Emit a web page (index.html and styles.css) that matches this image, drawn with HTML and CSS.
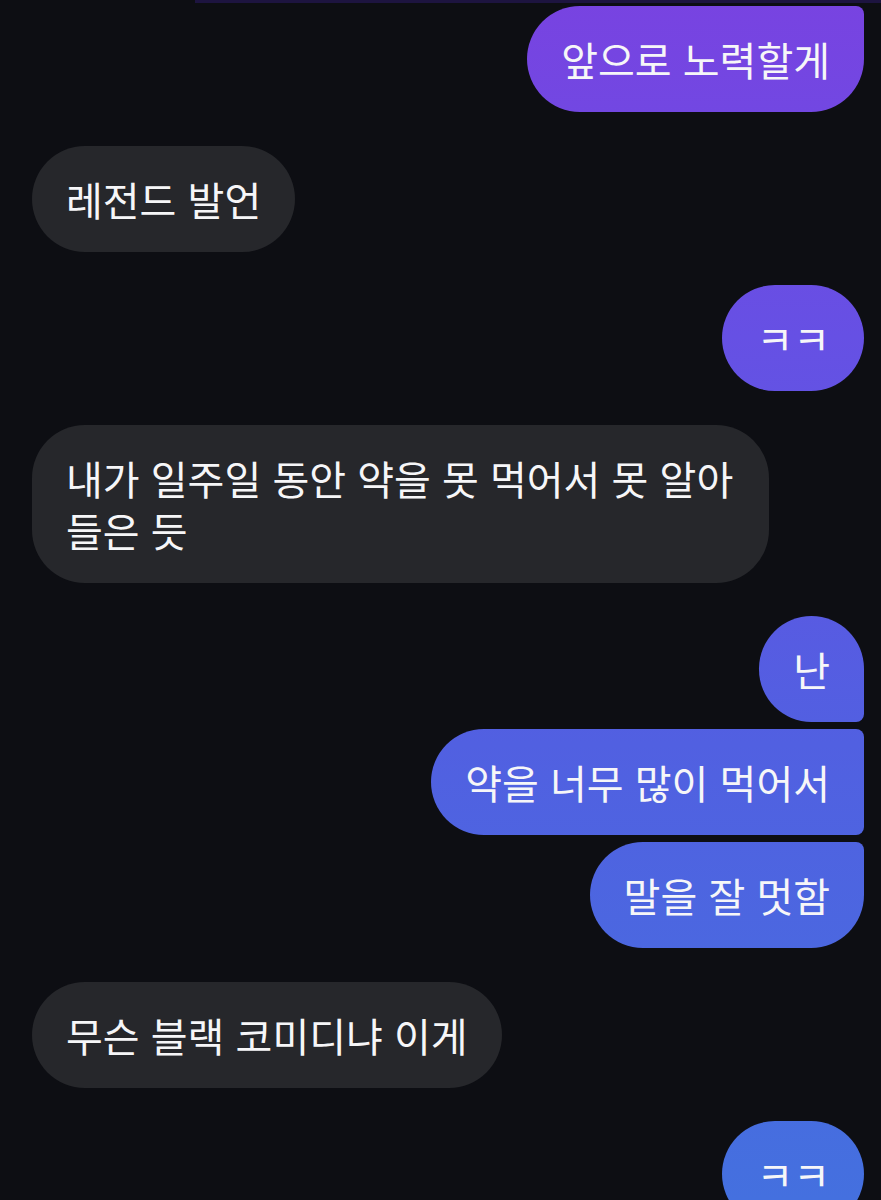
FILE: index.html
```html
<!DOCTYPE html>
<html lang="ko">
<head>
  <meta charset="UTF-8"/>
  <meta name="viewport" content="width=device-width, initial-scale=1.0"/>
  <title>메시지</title>
  <link rel="stylesheet" href="styles.css">
</head>
<body>
  <div class="thread">
    <!-- 위쪽에 잘린 이전 말풍선 -->
    <div class="edge"></div>

    <div class="group out cont">
      <div class="bubble">앞으로 노력할게</div>
    </div>

    <div class="group in">
      <div class="bubble">레전드 발언</div>
    </div>

    <div class="group out">
      <div class="bubble">ㅋㅋ</div>
    </div>

    <div class="group in">
      <div class="bubble">내가 일주일 동안 약을 못 먹어서 못 알아 들은 듯</div>
    </div>

    <div class="group out">
      <div class="bubble">난</div>
      <div class="bubble">약을 너무 많이 먹어서</div>
      <div class="bubble">말을 잘 멋함</div>
    </div>

    <div class="group in">
      <div class="bubble">무슨 블랙 코미디냐 이게</div>
    </div>

    <div class="group out">
      <div class="bubble">ㅋㅋ</div>
    </div>
  </div>
</body>
</html>
```

FILE: styles.css
```css
* { box-sizing: border-box; margin: 0; padding: 0; }

html, body {
  height: 100%;
  overflow: hidden;
}

body {
  background: #0d0e13;
  color: #f6f6f8;
  font-family: "Noto Sans CJK KR", "Noto Sans", sans-serif;
}

.thread {
  display: flex;
  flex-direction: column;
  gap: 33.5px;
  padding: 0 17px 0 32px;
}

.edge {
  height: 3px;
  margin: 0 -17px -30.5px 163px;
  background: #1d1440;
}

.group {
  display: flex;
  flex-direction: column;
  gap: 7px;
}
.group.out { align-items: flex-end; }
.group.in { align-items: flex-start; }

.bubble {
  max-width: 737px;
  padding: 27px 34px;
  border-radius: 53px;
  font-size: 40px;
  line-height: 52px;
}

.in .bubble {
  background: #26272b;
}

/* 보낸 메시지: 화면 기준 보라→파랑 그라데이션 */
.out .bubble {
  background: linear-gradient(180deg, #7843e1 0%, #6650e4 28%, #5160e1 62%, #4470df 100%) fixed;
}
.out .bubble + .bubble { border-top-right-radius: 8px; }
.out .bubble:not(:last-child) { border-bottom-right-radius: 8px; }
.out.cont .bubble:first-child { border-top-right-radius: 8px; }
```
